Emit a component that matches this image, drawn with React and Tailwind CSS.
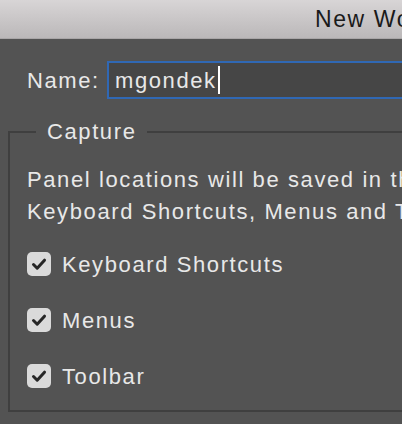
import React from "react";

function CheckRow({ label }) {
  return (
    <div className="flex h-[56px] items-center">
      <div className="flex h-[24px] w-[24px] items-center justify-center rounded-[5px] bg-[#dadada]">
        <svg width="24" height="24" viewBox="0 0 24 24">
          <path d="M6.5 12.5 L10.2 16.2 L17.5 8.2" fill="none" stroke="#262626" strokeWidth="3" strokeLinecap="round" strokeLinejoin="round" />
        </svg>
      </div>
      <span className="ml-[11px]">{label}</span>
    </div>
  );
}

export default function App() {
  return (
    <div className="h-[424px] w-[402px] overflow-hidden bg-[#535353] text-[22px] tracking-[1.6px] text-[#e8e8e8] font-['Liberation_Sans',Arial,sans-serif]">
      {/* title bar */}
      <div className="flex h-[39px] items-center whitespace-nowrap border-b border-[#a9a6a7] bg-gradient-to-b from-[#d8d5d6] to-[#bbb8b9] pl-[315px] text-[23px] text-[#1a1a1a]">
        New Workspace
      </div>

      {/* name row */}
      <div className="mt-[22px] flex items-center pl-[27px]">
        <span className="w-[80px] shrink-0">Name:</span>
        <div className="flex h-[38px] w-[340px] shrink-0 items-center border-2 border-[#3068b4] bg-[#464646] pl-[6px]">
          <span>mgondek</span>
          <span className="ml-[1px] h-[28px] w-[2px] bg-white" />
        </div>
      </div>

      {/* capture group */}
      <fieldset className="ml-[8px] mt-[20px] w-[420px] border-2 border-[#3f3f3f] pb-[6px] pl-[17px]">
        <legend className="ml-[9px] px-[11px] leading-[26px]">Capture</legend>
        <div className="mt-[19px] leading-[32px] whitespace-nowrap">
          <div>Panel locations will be saved in this workspace.</div>
          <div>Keyboard Shortcuts, Menus and Toolbar customizations are optional.</div>
        </div>
        <div className="mt-[8px]">
          <CheckRow label="Keyboard Shortcuts" />
          <CheckRow label="Menus" />
          <CheckRow label="Toolbar" />
        </div>
      </fieldset>
    </div>
  );
}
